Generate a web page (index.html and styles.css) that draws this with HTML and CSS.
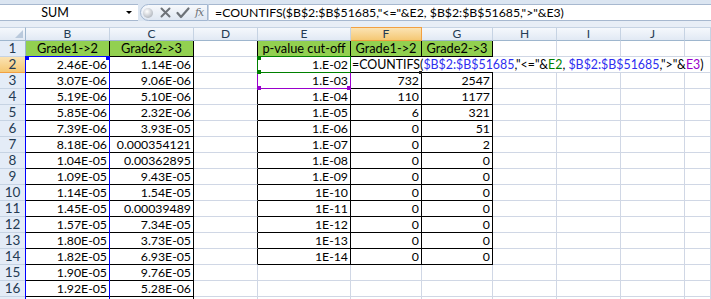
FILE: index.html
```html
<!DOCTYPE html>
<html lang="en">
<head>
    <meta charset="UTF-8">
    <title>Book1 - COUNTIFS</title>
    <link rel="stylesheet" href="styles.css">
</head>
<body>
<div class="window">
    <div class="topstrip"></div>

    <!-- formula bar -->
    <div class="fbar">
        <div class="namebox">
            <span class="name">SUM</span>
            <span class="arrow"></span>
        </div>
        <div class="fbtns">
            <span class="bead"></span>
            <svg class="ico" width="11" height="11" viewBox="0 0 11 11"><path d="M1.5 1.5 L9.5 9.5 M9.5 1.5 L1.5 9.5" stroke="#6d7278" stroke-width="2" stroke-linecap="round"/></svg>
            <svg class="ico" width="14" height="12" viewBox="0 0 14 12"><path d="M1.5 6 L5 10 L12.5 1.5" fill="none" stroke="#6d7278" stroke-width="2.2" stroke-linejoin="round" stroke-linecap="round"/></svg>
            <span class="fx">fx</span>
        </div>
        <div class="finput">=COUNTIFS($B$2:$B$51685,"&lt;="&amp;E2, $B$2:$B$51685,"&gt;"&amp;E3)</div>
    </div>
    <div class="band"></div>

    <!-- sheet -->
    <div class="sheet">
        <div class="row colhead">
            <div class="corner"><span class="tri"></span></div>
            <div class="ch">B</div><div class="ch">C</div><div class="ch">D</div><div class="ch">E</div>
            <div class="ch sel">F</div><div class="ch">G</div><div class="ch">H</div><div class="ch">I</div><div class="ch">J</div><div class="ch"></div>
        </div>

        <div class="row">
            <div class="rh">1</div>
            <div class="c bk hd">Grade1-&gt;2</div><div class="c bk hd">Grade2-&gt;3</div><div class="c bl"></div>
            <div class="c bk hd">p-value cut-off</div><div class="c bk hd">Grade1-&gt;2</div><div class="c bk hd">Grade2-&gt;3</div>
            <div class="c"></div><div class="c"></div><div class="c"></div><div class="c"></div>
        </div>
        <div class="row">
            <div class="rh sel">2</div>
            <div class="c bk n">2.46E-06</div><div class="c bk n">1.14E-06</div><div class="c bl"></div>
            <div class="c bk n">1.E-02</div>
            <div class="c bk edit">
                <span class="edittext">=COUNTIFS(<span class="rb">$B$2:$B$51685</span>,"&lt;="&amp;<span class="rg">E2</span>, <span class="rb">$B$2:$B$51685</span>,"&gt;"&amp;<span class="rp">E3</span>)</span>
            </div>
            <div class="c bk"></div>
            <div class="c"></div><div class="c"></div><div class="c"></div><div class="c"></div>
        </div>
        <div class="row">
            <div class="rh">3</div>
            <div class="c bk n">3.07E-06</div><div class="c bk n">9.06E-06</div><div class="c bl"></div>
            <div class="c bk n">1.E-03</div><div class="c bk n">732</div><div class="c bk n">2547</div>
            <div class="c"></div><div class="c"></div><div class="c"></div><div class="c"></div>
        </div>
        <div class="row">
            <div class="rh">4</div>
            <div class="c bk n">5.19E-06</div><div class="c bk n">5.10E-06</div><div class="c bl"></div>
            <div class="c bk n">1.E-04</div><div class="c bk n">110</div><div class="c bk n">1177</div>
            <div class="c"></div><div class="c"></div><div class="c"></div><div class="c"></div>
        </div>
        <div class="row">
            <div class="rh">5</div>
            <div class="c bk n">5.85E-06</div><div class="c bk n">2.32E-06</div><div class="c bl"></div>
            <div class="c bk n">1.E-05</div><div class="c bk n">6</div><div class="c bk n">321</div>
            <div class="c"></div><div class="c"></div><div class="c"></div><div class="c"></div>
        </div>
        <div class="row">
            <div class="rh">6</div>
            <div class="c bk n">7.39E-06</div><div class="c bk n">3.93E-05</div><div class="c bl"></div>
            <div class="c bk n">1.E-06</div><div class="c bk n">0</div><div class="c bk n">51</div>
            <div class="c"></div><div class="c"></div><div class="c"></div><div class="c"></div>
        </div>
        <div class="row">
            <div class="rh">7</div>
            <div class="c bk n">8.18E-06</div><div class="c bk n">0.000354121</div><div class="c bl"></div>
            <div class="c bk n">1.E-07</div><div class="c bk n">0</div><div class="c bk n">2</div>
            <div class="c"></div><div class="c"></div><div class="c"></div><div class="c"></div>
        </div>
        <div class="row">
            <div class="rh">8</div>
            <div class="c bk n">1.04E-05</div><div class="c bk n">0.00362895</div><div class="c bl"></div>
            <div class="c bk n">1.E-08</div><div class="c bk n">0</div><div class="c bk n">0</div>
            <div class="c"></div><div class="c"></div><div class="c"></div><div class="c"></div>
        </div>
        <div class="row">
            <div class="rh">9</div>
            <div class="c bk n">1.09E-05</div><div class="c bk n">9.43E-05</div><div class="c bl"></div>
            <div class="c bk n">1.E-09</div><div class="c bk n">0</div><div class="c bk n">0</div>
            <div class="c"></div><div class="c"></div><div class="c"></div><div class="c"></div>
        </div>
        <div class="row">
            <div class="rh">10</div>
            <div class="c bk n">1.14E-05</div><div class="c bk n">1.54E-05</div><div class="c bl"></div>
            <div class="c bk n">1E-10</div><div class="c bk n">0</div><div class="c bk n">0</div>
            <div class="c"></div><div class="c"></div><div class="c"></div><div class="c"></div>
        </div>
        <div class="row">
            <div class="rh">11</div>
            <div class="c bk n">1.45E-05</div><div class="c bk n">0.00039489</div><div class="c bl"></div>
            <div class="c bk n">1E-11</div><div class="c bk n">0</div><div class="c bk n">0</div>
            <div class="c"></div><div class="c"></div><div class="c"></div><div class="c"></div>
        </div>
        <div class="row">
            <div class="rh">12</div>
            <div class="c bk n">1.57E-05</div><div class="c bk n">7.34E-05</div><div class="c bl"></div>
            <div class="c bk n">1E-12</div><div class="c bk n">0</div><div class="c bk n">0</div>
            <div class="c"></div><div class="c"></div><div class="c"></div><div class="c"></div>
        </div>
        <div class="row">
            <div class="rh">13</div>
            <div class="c bk n">1.80E-05</div><div class="c bk n">3.73E-05</div><div class="c bl"></div>
            <div class="c bk n">1E-13</div><div class="c bk n">0</div><div class="c bk n">0</div>
            <div class="c"></div><div class="c"></div><div class="c"></div><div class="c"></div>
        </div>
        <div class="row">
            <div class="rh">14</div>
            <div class="c bk n">1.82E-05</div><div class="c bk n">6.93E-05</div><div class="c bl"></div>
            <div class="c bk n">1E-14</div><div class="c bk n">0</div><div class="c bk n">0</div>
            <div class="c"></div><div class="c"></div><div class="c"></div><div class="c"></div>
        </div>
        <div class="row">
            <div class="rh">15</div>
            <div class="c bk n">1.90E-05</div><div class="c bk n">9.76E-05</div><div class="c"></div>
            <div class="c"></div><div class="c"></div><div class="c"></div>
            <div class="c"></div><div class="c"></div><div class="c"></div><div class="c"></div>
        </div>
        <div class="row">
            <div class="rh">16</div>
            <div class="c bk n">1.92E-05</div><div class="c bk n">5.28E-06</div><div class="c"></div>
            <div class="c"></div><div class="c"></div><div class="c"></div>
            <div class="c"></div><div class="c"></div><div class="c"></div><div class="c"></div>
        </div>
        <div class="row">
            <div class="rh"></div>
            <div class="c bk"></div><div class="c bk"></div><div class="c"></div>
            <div class="c"></div><div class="c"></div><div class="c"></div>
            <div class="c"></div><div class="c"></div><div class="c"></div><div class="c"></div>
        </div>

        <!-- range highlights while editing F2 -->
        <div class="range blue-range">
            <span class="hdl tl"></span><span class="hdl tr"></span>
        </div>
        <div class="range green-range">
            <span class="hdl tl"></span><span class="hdl bl-h"></span>
        </div>
        <div class="range purple-range">
            <span class="hdl bl-h"></span><span class="hdl br"></span>
        </div>
        <div class="fillhandle"></div>
    </div>
</div>
</body>
</html>
```

FILE: styles.css
```css
:root {
    --cols: 26px 84px 84px 64px 93px 71px 71px 64px 64px 64px 1fr;
    --grid: #d0d7e5;
    --hdr-line: #9eb6ce;
    --green: #92d050;
    --ref-blue: #0000ff;
    --ref-green: #008000;
    --ref-purple: #9900cc;
}

body {
    margin: 0;
    font-family: Lato, "Liberation Sans", sans-serif;
    font-size: 12px;
    color: #000;
    background: #fff;
}

.window {
    width: 711px;
    height: 299px;
    overflow: hidden;
}

/* formula bar */
.topstrip {
    height: 4px;
    background: #dbe5f1;
}

.fbar {
    display: flex;
    height: 17px;
    background: #dbe5f1;
}

.namebox {
    width: 138px;
    box-sizing: border-box;
    background: #fff;
    border-top: 1px solid #a7b8cf;
    border-bottom: 1px solid #a7b8cf;
    display: flex;
    align-items: center;
}

.name {
    flex: 1;
    text-align: center;
    padding-right: 16px;
    font-size: 12.5px;
}

.arrow {
    width: 0;
    height: 0;
    border-left: 3px solid transparent;
    border-right: 3px solid transparent;
    border-top: 3px solid #000;
    margin-right: 6px;
}

.fbtns {
    width: 68px;
    margin-left: 2px;
    box-sizing: border-box;
    border: 1px solid #a3b7d1;
    border-radius: 9px 0 0 9px;
    background: linear-gradient(#f7f9fc, #dfe7f2);
    display: flex;
    align-items: center;
    gap: 5px;
    padding-left: 2px;
}

.bead {
    width: 10px;
    height: 10px;
    border-radius: 50%;
    background: radial-gradient(circle at 40% 35%, #fff 0, #c8ccd2 55%, #9aa1a9 100%);
    margin-right: 2px;
}

.fx {
    font-family: "DejaVu Serif", serif;
    font-style: italic;
    font-size: 11px;
    color: #6d7278;
    letter-spacing: -1px;
}

.finput {
    flex: 1;
    box-sizing: border-box;
    background: #fff;
    border-top: 1px solid #a7b8cf;
    border-bottom: 1px solid #a7b8cf;
    border-left: 1px solid #c8d4e3;
    padding-left: 6px;
    font-size: 12.3px;
    line-height: 15px;
    white-space: nowrap;
}

.band {
    height: 6px;
    background: #e8eef6;
}

/* sheet grid */
.sheet {
    position: relative;
}

.row {
    display: grid;
    grid-template-columns: var(--cols);
    height: 16px;
}

.colhead {
    height: 14px;
}

.corner,
.ch {
    box-sizing: border-box;
    background: linear-gradient(#f5f8fc, #e1e9f4);
    border-top: 1px solid #c6d3e3;
    border-right: 1px solid #c6d3e3;
    border-bottom: 1px solid var(--hdr-line);
    text-align: center;
    font-size: 12px;
    line-height: 12px;
    color: #243b53;
    overflow: hidden;
}

.corner {
    position: relative;
    border-right-color: var(--hdr-line);
}

.tri {
    position: absolute;
    right: 2px;
    bottom: 2px;
    width: 0;
    height: 0;
    border-left: 8px solid transparent;
    border-bottom: 8px solid #b9c9dc;
}

.ch.sel,
.rh.sel {
    background: linear-gradient(#fbe3b3, #f5c874);
    border-color: #f2a041;
}

.rh {
    box-sizing: border-box;
    background: #e4ecf7;
    border-right: 1px solid var(--hdr-line);
    border-bottom: 1px solid #c6d3e3;
    text-align: center;
    font-size: 13.5px;
    line-height: 15px;
    color: #243b53;
}

.c {
    box-sizing: border-box;
    border-right: 1px solid var(--grid);
    border-bottom: 1px solid var(--grid);
    font-size: 12.3px;
    line-height: 15px;
    white-space: nowrap;
    overflow: hidden;
}

.c.bk {
    border-right-color: #000;
    border-bottom-color: #000;
}

.c.bl {
    border-right-color: #000;
}

.hd {
    background: var(--green);
    text-align: center;
    font-size: 12.8px;
}

.n {
    text-align: right;
    padding-right: 2px;
}

/* cell in edit mode */
.edit {
    position: relative;
    overflow: visible;
    z-index: 2;
}

.edittext {
    position: absolute;
    left: 0;
    top: 0;
    width: 355px;
    height: 15px;
    padding-left: 1px;
    background: #fff;
    font-size: 12.4px;
}

.rb { color: #2e2ef0; }
.rg { color: var(--ref-green); }
.rp { color: var(--ref-purple); }

/* reference range outlines */
.range {
    position: absolute;
    box-sizing: border-box;
    z-index: 3;
}

.blue-range {
    left: 25px;
    top: 29px;
    width: 85px;
    height: 300px;
    border: 1px solid var(--ref-blue);
    color: var(--ref-blue);
}

.green-range {
    left: 257px;
    top: 29px;
    width: 94px;
    height: 17px;
    border: 1px solid var(--ref-green);
    color: var(--ref-green);
    z-index: 4;
}

.purple-range {
    left: 257px;
    top: 45px;
    width: 94px;
    height: 17px;
    border: 1px solid var(--ref-purple);
    color: var(--ref-purple);
}

.hdl {
    position: absolute;
    width: 4px;
    height: 4px;
    background: currentColor;
}

.hdl.tl { left: -1px; top: -1px; }
.hdl.tr { right: -1px; top: -1px; }
.hdl.bl-h { left: -1px; bottom: -2px; }
.hdl.br { right: -1px; bottom: -2px; }

.fillhandle {
    position: absolute;
    left: 419px;
    top: 44px;
    width: 3px;
    height: 3px;
    background: #222;
    z-index: 5;
}
```
